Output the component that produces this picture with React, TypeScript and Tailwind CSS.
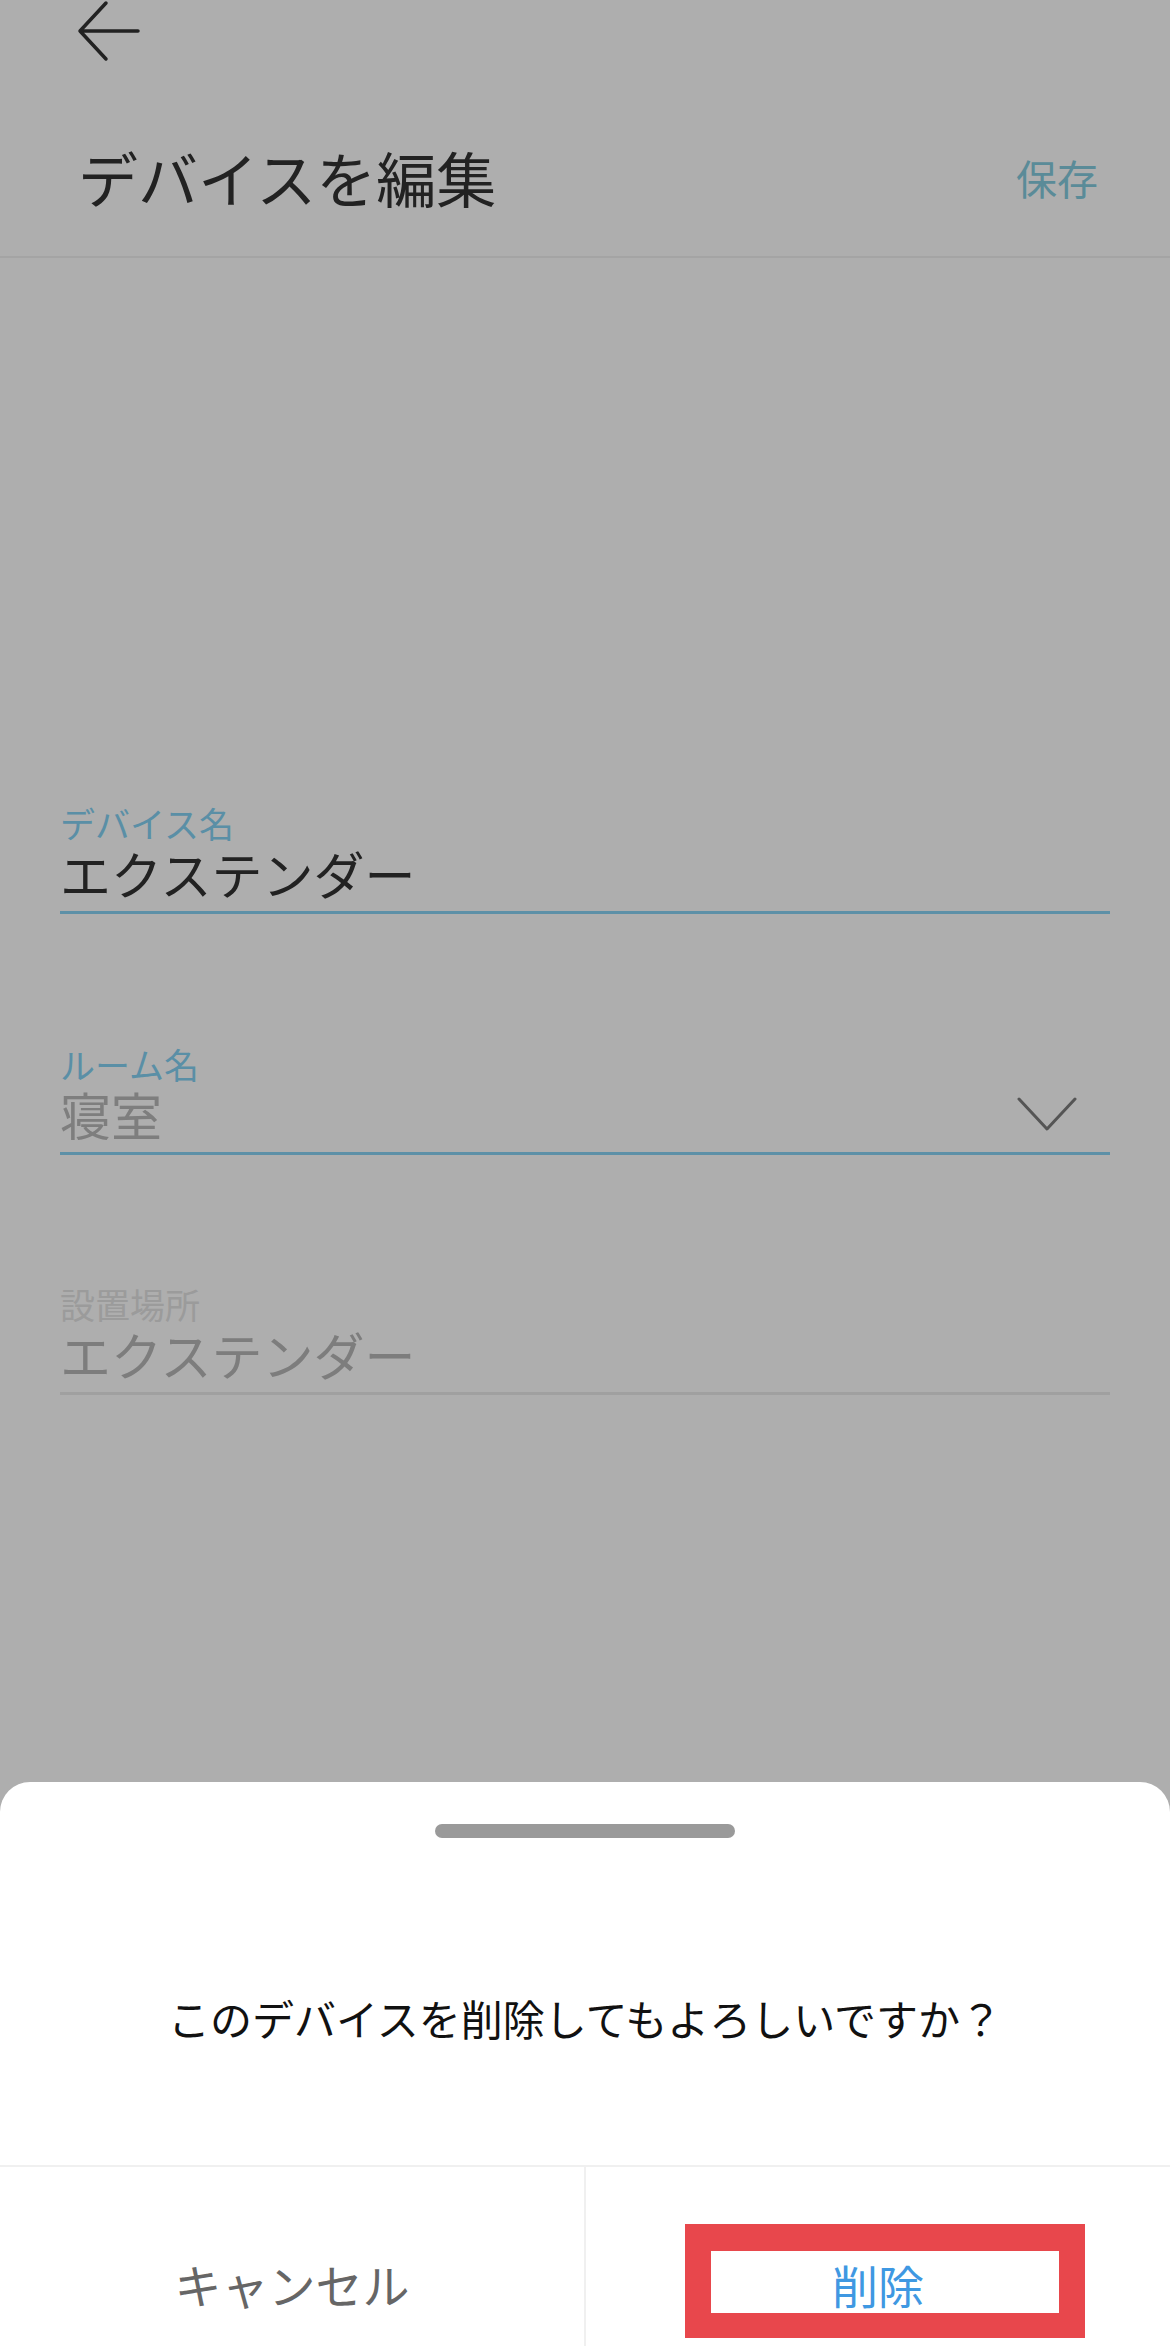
const FONT = { fontFamily: '"Noto Sans CJK JP", "Noto Sans", sans-serif' };

function BackArrow() {
  return (
    <svg width="64" height="62" viewBox="0 0 64 62" fill="none" className="block">
      <path d="M62 31H4M30 3L4 31l26 28" stroke="#222" strokeWidth="3.5" strokeLinecap="round" strokeLinejoin="round" />
    </svg>
  );
}

function Chevron() {
  return (
    <svg width="60" height="34" viewBox="0 0 60 34" fill="none" className="block">
      <path d="M2 2l28 30L58 2" stroke="#555" strokeWidth="3" strokeLinecap="round" strokeLinejoin="round" />
    </svg>
  );
}

function Field({
  label,
  value,
  labelClass,
  valueClass,
  lineClass,
  mt,
  right,
}: {
  label: string;
  value: string;
  labelClass: string;
  valueClass: string;
  lineClass: string;
  mt: string;
  right?: React.ReactNode;
}) {
  return (
    <div className={mt}>
      <div className={`h-[40px] text-[35px] leading-[40px] ${labelClass}`}>{label}</div>
      <div className="mt-[2px] flex h-[56px] items-center justify-between">
        <span className={`text-[51px] leading-[56px] ${valueClass}`}>{value}</span>
        {right}
      </div>
      <div className={`mt-[10px] h-[3px] ${lineClass}`} />
    </div>
  );
}

export default function App() {
  return (
    <div style={FONT} className="relative flex h-[2346px] w-[1170px] flex-col overflow-hidden bg-[#aeaeae]">
      {/* ヘッダー */}
      <div className="h-[62px] pl-[76px]">
        <BackArrow />
      </div>
      <div className="flex h-[194px] items-start justify-between pl-[78px] pr-[72px] pt-[80px]">
        <h1 className="text-[60px] leading-[70px] text-[#222]">デバイスを編集</h1>
        <span className="text-[41px] leading-[70px] text-[#5a8b98]">保存</span>
      </div>
      <div className="h-[2px] bg-[#a4a4a4]" />

      {/* 入力欄 */}
      <div className="px-[60px]">
        <Field
          mt="mt-[545px]"
          label="デバイス名"
          value="エクステンダー"
          labelClass="text-[#5a8fa6]"
          valueClass="text-[#222]"
          lineClass="bg-[#5d90a7]"
        />
        <Field
          mt="mt-[130px]"
          label="ルーム名"
          value="寝室"
          labelClass="text-[#5a8fa6]"
          valueClass="text-[#7e7e7e]"
          lineClass="bg-[#5d90a7]"
          right={
            <span className="mr-[33px]">
              <Chevron />
            </span>
          }
        />
        <Field
          mt="mt-[129px]"
          label="設置場所"
          value="エクステンダー"
          labelClass="text-[#9b9b9b]"
          valueClass="text-[#7d7d7d]"
          lineClass="bg-[#a0a0a0]"
        />
      </div>

      {/* 削除確認シート */}
      <div className="mt-auto h-[564px] rounded-t-[30px] bg-white">
        <div className="mx-auto mt-[42px] h-[14px] w-[300px] rounded-full bg-[#9a9a9a]" />
        <p className="mt-[155px] text-center text-[42px] leading-[50px] text-[#111]">
          このデバイスを削除してもよろしいですか？
        </p>
        <div className="mt-[122px] h-[2px] bg-[#f0f0f0]" />
        <div className="flex h-[179px]">
          <button className="flex-1 pt-[54px] text-[47px] leading-[56px] text-[#666]">キャンセル</button>
          <div className="w-[2px] bg-[#f0f0f0]" />
          <button className="flex-1 pt-[54px] text-[46px] leading-[56px] text-[#3f98e2]">削除</button>
        </div>
      </div>

      {/* 注釈の赤枠 */}
      <div className="absolute left-[685px] top-[2224px] h-[114px] w-[400px] border-[26px] border-b-[25px] border-t-[27px] border-[#e8474c]" />
    </div>
  );
}
